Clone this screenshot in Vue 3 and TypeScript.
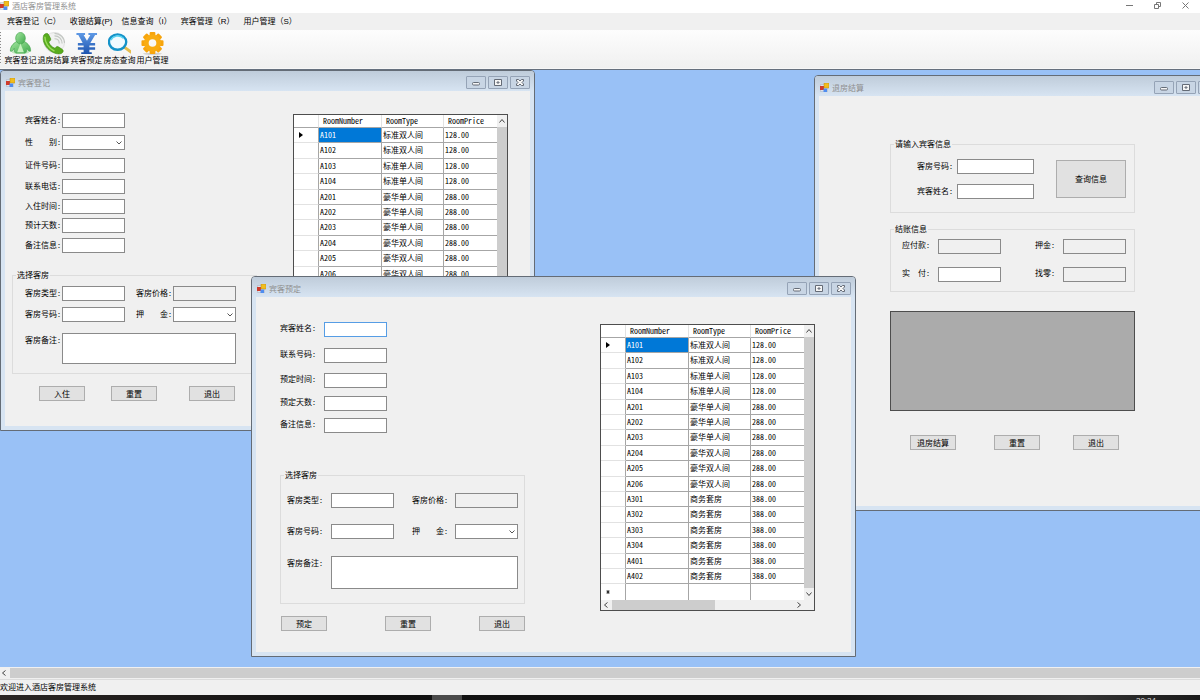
<script setup lang="ts">
interface Field { id: string; label: string; kind: 'text' | 'select'; focus?: boolean }
interface ChildWindow { id: string; title: string; fields: Field[]; actions: string[] }
interface Room { number: string; type: string; price: string }

const menus: string[] = ['宾客登记（C）', '收银结算(P)', '信息查询（I）', '宾客管理（R）', '用户管理（S）']

const tools: { icon: string; label: string }[] = [
  { icon: 'guest', label: '宾客登记' },
  { icon: 'phone', label: '退房结算' },
  { icon: 'yuan', label: '宾客预定' },
  { icon: 'search', label: '房态查询' },
  { icon: 'gear', label: '用户管理' },
]

const text = (id: string, label: string, focus = false): Field => ({ id, label, kind: 'text', focus })

const windows: ChildWindow[] = [
  {
    id: 'checkin',
    title: '宾客登记',
    fields: [
      text('name', '宾客姓名:'),
      { id: 'sex', label: '性　　别:', kind: 'select' },
      text('card', '证件号码:'),
      text('phone', '联系电话:'),
      text('date', '入住时间:'),
      text('days', '预计天数:'),
      text('memo', '备注信息:'),
    ],
    actions: ['入住', '重置', '退出'],
  },
  { id: 'checkout', title: '退房结算', fields: [], actions: ['退房结算', '重置', '退出'] },
  {
    id: 'booking',
    title: '宾客预定',
    fields: [
      text('name', '宾客姓名:', true),
      text('phone', '联系号码:'),
      text('date', '预定时间:'),
      text('days', '预定天数:'),
      text('memo', '备注信息:'),
    ],
    actions: ['预定', '重置', '退出'],
  },
]

const room = (type: string, price: string, ...numbers: string[]): Room[] =>
  numbers.map((number) => ({ number, type, price }))

const rooms: Room[] = [
  ...room('标准双人间', '128.00', 'A101', 'A102'),
  ...room('标准单人间', '128.00', 'A103', 'A104'),
  ...room('豪华单人间', '288.00', 'A201', 'A202', 'A203'),
  ...room('豪华双人间', '288.00', 'A204', 'A205', 'A206'),
  ...room('商务套房', '388.00', 'A301', 'A302', 'A303', 'A304', 'A401', 'A402'),
]

const teeth: number[] = [0, 45, 90, 135, 180, 225, 270, 315]
</script>

<template>
  <div class="app">
    <header class="titlebar">
      <svg class="form-icon" viewBox="0 0 18 18" aria-hidden="true">
        <rect x="0.5" y="3.5" width="15" height="13" fill="#dfe3ea" stroke="#a9b0bd" />
        <rect x="0" y="6" width="8" height="8" fill="#cf3a2c" />
        <rect x="8" y="0" width="10" height="10" fill="#f2bd1d" stroke="#b98a1a" />
        <rect x="7" y="11" width="7" height="7" fill="#4f8df0" />
      </svg>
      <h1>酒店客房管理系统</h1>
      <div class="controls">
        <button type="button" aria-label="最小化"><svg viewBox="0 0 9 9"><path d="M1 4.5h7" /></svg></button>
        <button type="button" aria-label="还原"><svg viewBox="0 0 9 9"><path d="M1.5 3.5h4v4h-4zM3.5 3.5v-2h4v4h-2" /></svg></button>
        <button type="button" aria-label="关闭"><svg viewBox="0 0 9 9"><path d="M1.5 1.5l6 6M7.5 1.5l-6 6" /></svg></button>
      </div>
    </header>

    <nav class="menubar">
      <button v-for="m in menus" :key="m" type="button">{{ m }}</button>
    </nav>

    <div class="toolbar">
      <button v-for="t in tools" :key="t.label" type="button">
        <svg viewBox="0 0 24 24" aria-hidden="true">
          <template v-if="t.icon === 'guest'">
            <defs>
              <linearGradient id="g-guest" x1="0" y1="0" x2="1" y2="1">
                <stop offset="0" stop-color="#a4e6a0" /><stop offset="1" stop-color="#3faa4b" />
              </linearGradient>
            </defs>
            <ellipse cx="12" cy="21" rx="9" ry="2" fill="#bfe6bd" />
            <path d="M8 10C4 12 1 16 1.5 20c2 .8 3-1 4-3 0 2 0 4 1.5 5h10c1.5-1 1.5-3 1.5-5 1 2 2 3.8 4 3C23 16 20 12 16 10z" fill="url(#g-guest)" stroke="#4daa55" stroke-width=".8" />
            <ellipse cx="12" cy="6.5" rx="5" ry="6" fill="url(#g-guest)" stroke="#4daa55" stroke-width=".8" />
            <path d="M12 12l-3.5 9h7z" fill="#c5f2bd" />
          </template>
          <template v-else-if="t.icon === 'phone'">
            <circle cx="13" cy="11" r="10.5" fill="#f1f2f1" stroke="#dedede" />
            <path d="M13 7c3 0 5 2 5 5M13 4c5 0 8 3.5 8 8M13 1.5c6 0 10.5 4.5 10.5 10" fill="none" stroke="#c3c7c3" stroke-width="1.2" />
            <path d="M2 3c2-2 4-2 5 0l2 4c.5 1.5-1 2.5-2 3.5 1 3 3.5 5.5 6.500 6.5 1-1 2-2.5 3.5-1.5l4 2.5c2 1.5 1 3.5-1 4.5C11 25-2 13 2 3z" fill="#58ad1d" stroke="#3f8c12" stroke-width=".7" />
            <path d="M3 5c0 6 4 12 10 15" fill="none" stroke="#9bdc5c" stroke-width="1.5" />
          </template>
          <template v-else-if="t.icon === 'yuan'">
            <defs>
              <linearGradient id="g-yuan" x1="0" y1="0" x2="0" y2="1">
                <stop offset="0" stop-color="#5f9ae6" /><stop offset="1" stop-color="#1c53ae" />
              </linearGradient>
            </defs>
            <path d="M1.5 1h9v2H9l3.500 6L16 3h-2V1h9v2h-2l-5 8.5h5V14h-6v2h6v2.500h-6V21h2.500v2h-11v-2H9v-2.500H3V16h6v-2H3v-2.500h5L3.500 3h-2z" fill="url(#g-yuan)" />
          </template>
          <template v-else-if="t.icon === 'search'">
            <path d="M16 15l8 6" stroke="#e5bd4c" stroke-width="3" stroke-linecap="round" />
            <ellipse cx="10" cy="10.5" rx="9" ry="8" fill="#f2fbff" stroke="#1593c9" stroke-width="2.5" />
            <path d="M3 8.5C5 4 12 2.5 16 6.5" fill="none" stroke="#56d3f0" stroke-width="1.5" />
          </template>
          <template v-else>
            <ellipse cx="12" cy="22.8" rx="10" ry="1" fill="#c9c9c9" />
            <g fill="#f7a40d">
              <rect v-for="a in teeth" :key="a" x="9" y="0" width="6" height="6" rx="1" :transform="`rotate(${a} 12 11.5)`" />
            </g>
            <circle cx="12" cy="11.5" r="6.5" fill="none" stroke="#f9ac12" stroke-width="5" />
          </template>
        </svg>
        <span>{{ t.label }}</span>
      </button>
    </div>

    <main class="desktop">
      <section v-for="w in windows" :key="w.id" :class="['window', w.id]" :aria-label="w.title">
        <header class="caption">
          <svg class="form-icon" viewBox="0 0 18 18" aria-hidden="true">
            <rect x="0.5" y="3.5" width="15" height="13" fill="#dfe3ea" stroke="#a9b0bd" />
            <rect x="0" y="6" width="8" height="8" fill="#cf3a2c" />
            <rect x="8" y="0" width="10" height="10" fill="#f2bd1d" stroke="#b98a1a" />
            <rect x="7" y="11" width="7" height="7" fill="#4f8df0" />
          </svg>
          <h2>{{ w.title }}</h2>
          <div class="caption-buttons">
            <button type="button" aria-label="最小化"><svg viewBox="0 0 10 9"><rect x="1.5" y="4.5" width="7" height="2.5" rx="1" /></svg></button>
            <button type="button" aria-label="最大化"><svg viewBox="0 0 10 9"><path d="M1.5 1.5h7v6h-7zM4 4h2v1H4z" /></svg></button>
            <button type="button" aria-label="关闭"><svg viewBox="0 0 10 9"><path d="M1.5 1.5h2L5 3l1.5-1.5h2v1.5L7 4.5 8.5 6v1.5h-2L5 6 3.5 7.5h-2V6L3 4.5 1.5 3z" /></svg></button>
          </div>
        </header>

        <div v-if="w.id === 'checkout'" class="body">
          <form class="entry" @submit.prevent>
            <fieldset class="lookup">
              <legend>请输入宾客信息</legend>
              <div class="lookup-grid">
                <label for="out-room">客房号码:</label><input id="out-room" type="text" />
                <label for="out-name">宾客姓名:</label><input id="out-name" type="text" />
                <button type="button" class="query">查询信息</button>
              </div>
            </fieldset>
            <fieldset class="bill">
              <legend>结账信息</legend>
              <div class="bill-grid">
                <label for="out-due">应付款:</label><input id="out-due" type="text" readonly />
                <label for="out-deposit" class="second">押金:</label><input id="out-deposit" type="text" readonly />
                <label for="out-paid">实　付:</label><input id="out-paid" type="text" />
                <label for="out-change" class="second">找零:</label><input id="out-change" type="text" readonly />
              </div>
            </fieldset>
            <div class="empty-grid"></div>
            <div class="actions">
              <button v-for="a in w.actions" :key="a" type="button">{{ a }}</button>
            </div>
          </form>
        </div>

        <div v-else class="body">
          <form class="entry" @submit.prevent>
            <div class="fields">
              <template v-for="f in w.fields" :key="f.id">
                <label :for="`${w.id}-${f.id}`">{{ f.label }}</label>
                <span v-if="f.kind === 'select'" class="combo">
                  <select :id="`${w.id}-${f.id}`"><option></option><option>男</option><option>女</option></select>
                  <svg viewBox="0 0 6 4" aria-hidden="true"><path d="M.5.5L3 3 5.5.5" /></svg>
                </span>
                <input v-else :id="`${w.id}-${f.id}`" type="text" :class="{ focused: f.focus }" />
              </template>
            </div>
            <fieldset class="room">
              <legend>选择客房</legend>
              <div class="room-grid">
                <label :for="`${w.id}-type`">客房类型:</label><input :id="`${w.id}-type`" type="text" />
                <label :for="`${w.id}-price`" class="second">客房价格:</label><input :id="`${w.id}-price`" type="text" readonly />
                <label :for="`${w.id}-room`">客房号码:</label><input :id="`${w.id}-room`" type="text" />
                <label :for="`${w.id}-deposit`" class="second">押　　金:</label>
                <span class="combo">
                  <select :id="`${w.id}-deposit`"><option></option><option>100</option><option>200</option></select>
                  <svg viewBox="0 0 6 4" aria-hidden="true"><path d="M.5.5L3 3 5.5.5" /></svg>
                </span>
                <label :for="`${w.id}-note`">客房备注:</label><textarea :id="`${w.id}-note`"></textarea>
              </div>
            </fieldset>
            <div class="actions">
              <button v-for="a in w.actions" :key="a" type="button">{{ a }}</button>
            </div>
          </form>

          <div class="data-grid">
            <table>
              <colgroup><col class="c-mark" /><col class="c-number" /><col class="c-type" /><col /></colgroup>
              <thead>
                <tr><th></th><th>RoomNumber</th><th>RoomType</th><th>RoomPrice</th></tr>
              </thead>
              <tbody>
                <tr v-for="(r, i) in rooms" :key="r.number">
                  <td class="mark"><svg v-if="i === 0" viewBox="0 0 4 6" aria-hidden="true"><path d="M0 0l4 3-4 3z" /></svg></td>
                  <td :class="{ selected: i === 0 }">{{ r.number }}</td>
                  <td>{{ r.type }}</td>
                  <td>{{ r.price }}</td>
                </tr>
                <tr>
                  <td class="mark"><svg viewBox="0 0 4 6" aria-hidden="true"><path d="M2 1v4M.5 2l3 2M3.5 2l-3 2" stroke="#222" /></svg></td>
                  <td></td><td></td><td></td>
                </tr>
              </tbody>
            </table>
            <div class="scroll vertical">
              <svg viewBox="0 0 6 6"><path d="M.5 4.5L3 1.5l2.5 3" /></svg>
              <span></span>
              <svg viewBox="0 0 6 6"><path d="M.5 1.5l2.5 3 2.5-3" /></svg>
            </div>
            <div class="scroll horizontal">
              <svg viewBox="0 0 6 6"><path d="M4.5.5L1.5 3l3 2.5" /></svg>
              <span></span>
              <svg viewBox="0 0 6 6"><path d="M1.5.5L4.5 3l-3 2.5" /></svg>
            </div>
          </div>
        </div>
      </section>
    </main>

    <div class="scroll page-scroll">
      <svg viewBox="0 0 6 6"><path d="M4.5.5L1.5 3l3 2.5" /></svg>
      <span></span>
    </div>
    <footer class="status">欢迎进入酒店客房管理系统</footer>
    <div class="taskbar"><i></i><time>20:24</time></div>
  </div>
</template>

<style>
body {
  margin: 0;
}
</style>

<style scoped>
.app {
  display: flex;
  flex-direction: column;
  height: 100vh;
  overflow: hidden;
  background: #f0f0f0;
  color: #000;
  font: 8px/13px "Liberation Sans", "Noto Sans CJK SC", sans-serif;
}
.app *,
.app *::before {
  box-sizing: border-box;
}
button,
input,
select,
textarea {
  margin: 0;
  padding: 0;
  border-radius: 0;
  font: inherit;
  color: inherit;
}
button {
  white-space: nowrap;
}
svg {
  display: block;
  flex: none;
}
h1,
h2 {
  margin: 0;
  font-size: 8px;
  font-weight: 400;
  color: #8f8f8f;
}
.form-icon {
  width: 9px;
  height: 9px;
}

/* main window frame */
.titlebar {
  display: flex;
  flex: none;
  align-items: center;
  gap: 3px;
  height: 13px;
  background: #fff;
  line-height: 12px;
}
.titlebar .form-icon {
  margin-bottom: 2px;
}
.controls {
  display: flex;
  gap: 19px;
  margin-left: auto;
  padding: 0 10px 3px 0;
}
.controls button {
  border: 0;
  background: none;
}
.controls svg {
  width: 9px;
  height: 9px;
  fill: none;
  stroke: #777;
}
.menubar {
  display: flex;
  flex: none;
  gap: 9px;
  height: 17px;
  padding-left: 7px;
}
.menubar button {
  border: 0;
  background: none;
  line-height: 17px;
}
.toolbar {
  display: flex;
  flex: none;
  height: 39px;
  padding: 2px 0 0 3px;
  border-bottom: 1px solid #f7f7f7;
  background: linear-gradient(#fdfdfd, #f0f0f0);
}
.toolbar::before {
  content: "";
  width: 1px;
  height: 32px;
  margin: 0 2px 0 -3px;
  background: repeating-linear-gradient(#8a8a8a 0 1px, #f6f6f6 1px 3px);
}
.toolbar button {
  display: flex;
  flex-direction: column;
  align-items: center;
  width: 33px;
  border: 0;
  background: none;
  line-height: 12px;
}
.toolbar button:first-of-type {
  margin-left: 1px;
}
.toolbar svg {
  width: 23px;
  height: 23px;
}

/* child windows */
.desktop {
  position: relative;
  flex: 1;
  min-height: 0;
  overflow: hidden;
  border-top: 1px solid #66707e;
  background: #99c1f6;
}
.window {
  position: absolute;
  display: flex;
  flex-direction: column;
  padding: 0 4px 4px;
  border: 1px solid #646c76;
  border-radius: 4px 4px 0 0;
  background: #d7e4f2;
  font-family: "Noto Sans Mono CJK SC", "Noto Sans CJK SC", "Liberation Mono", monospace;
}
.checkin {
  left: 0;
  top: 0;
  width: 535px;
  height: 361px;
}
.checkout {
  left: 814px;
  top: 5px;
  width: 409px;
  height: 436px;
}
.booking {
  left: 251px;
  top: 206px;
  width: 605px;
  height: 381px;
}
.caption {
  display: flex;
  flex: none;
  align-items: center;
  gap: 3px;
  height: 20px;
  margin: 0 -4px;
  padding: 3px 4px 0 5px;
  border-radius: 3px 3px 0 0;
  background: linear-gradient(#bfccda, #d7e4f2);
}
.caption-buttons {
  display: flex;
  gap: 2px;
  margin-left: auto;
}
.caption-buttons button {
  display: grid;
  place-items: center;
  width: 20px;
  height: 13px;
  border: 1px solid #95a3b6;
  border-radius: 1px;
  background: #c8d5e4;
}
.caption-buttons svg {
  width: 10px;
  height: 9px;
  fill: #f5f5f5;
  stroke: #646b76;
}
.body {
  display: flex;
  flex: 1;
  align-items: flex-start;
  background: #f0f0f0;
}
.entry {
  flex: none;
  width: 245px;
}

/* controls */
label,
legend {
  white-space: nowrap;
}
input,
select,
textarea {
  display: block;
  width: 100%;
  height: 15px;
  border: 1px solid #8a8a8a;
  background: #fff;
  outline: none;
}
input[readonly] {
  background: #f0f0f0;
}
.focused {
  border-color: #569de5;
}
textarea {
  resize: none;
}
.combo {
  position: relative;
  height: 15px;
}
.combo select {
  appearance: none;
}
.combo svg {
  position: absolute;
  right: 3px;
  top: 6px;
  width: 6px;
  height: 4px;
  fill: none;
  stroke: #555;
  pointer-events: none;
}
fieldset {
  min-width: 0;
  margin: 0;
  padding: 0;
  border: 1px solid #dcdcdc;
}
legend {
  margin-left: 3px;
  padding: 0 1px;
  line-height: 12px;
}
.actions {
  display: grid;
}
.actions button,
.query {
  width: 46px;
  height: 15px;
  border: 1px solid #adadad;
  background: #e1e1e1;
  line-height: 12px;
}
.fields,
.room-grid,
.lookup-grid,
.bill-grid {
  display: grid;
  align-items: start;
}
.room-grid .second,
.bill-grid .second {
  grid-column: -3;
}
.room-grid input,
.bill-grid input {
  width: 63px;
}
.room-grid textarea {
  grid-column: 2 / -1;
  height: 100%;
}

/* guest registration */
.checkin .body {
  gap: 36px;
  padding: 22px 0 0 7px;
}
.checkin .fields {
  grid-template-columns: 37px 63px;
  grid-template-rows: 22px 23px 21px 20px 19px 20px 15px;
  padding-left: 13px;
}
.checkin .room {
  margin-top: 16px;
}
.checkin .room-grid {
  grid-template-columns: 37px 63px 11px 37px 63px;
  grid-template-rows: 21px 26px 31px;
  padding: 5px 0 9px 12px;
}
.checkin .actions {
  grid-template-columns: 72px 78px 46px;
  margin: 12px 0 0 27px;
}

/* reservation */
.booking .body {
  gap: 75px;
  padding: 25px 0 0 24px;
}
.booking .fields {
  grid-template-columns: 44px 63px;
  grid-template-rows: 26px 25px 23px 22px 15px;
  line-height: 11px;
}
.booking .room {
  margin-top: 36px;
}
.booking .room-grid {
  grid-template-columns: 44px 63px 18px 43px 63px;
  grid-template-rows: 31px 32px 33px;
  padding: 12px 0 14px 6px;
}
.booking .actions {
  grid-template-columns: 104px 94px 46px;
  margin: 12px 0 0 1px;
}

/* checkout */
.checkout .body {
  padding: 42px 0 0 71px;
}
.lookup-grid {
  grid-template-columns: 40px 77px 22px 70px;
  grid-template-rows: 25px 15px;
  padding: 9px 0 13px 26px;
}
.lookup-grid label {
  grid-column: 1;
}
.query {
  grid-area: 1 / 4 / 3 / 5;
  align-self: center;
  width: 70px;
  height: 38px;
}
.bill {
  margin-top: 10px;
}
.bill-grid {
  grid-template-columns: 36px 63px 34px 28px 63px;
  grid-template-rows: 28px 15px;
  padding: 4px 0 9px 11px;
  line-height: 11px;
}
.empty-grid {
  height: 100px;
  margin-top: 19px;
  border: 1px solid #4d4d4d;
  background: #ababab;
}
.checkout .actions {
  grid-template-columns: 84px 79px 46px;
  margin: 24px 0 0 20px;
}

/* room list */
.data-grid {
  display: grid;
  flex: none;
  grid-template: 275px 10px / 203px 10px;
  margin-top: 1px;
  border: 1px solid #4d4d4d;
  background: #f0f0f0;
}
.booking .data-grid {
  margin-top: 2px;
}
table {
  width: 100%;
  table-layout: fixed;
  border-collapse: separate;
  border-spacing: 0;
  background: #fff;
}
.c-mark {
  width: 25px;
}
.c-number {
  width: 63px;
}
.c-type {
  width: 62px;
}
tr {
  height: 15px;
}
tbody tr:nth-child(5n + 2),
tbody tr:nth-child(5n + 4) {
  height: 16px;
}
th,
td {
  padding: 0 1px;
  border-right: 1px solid #a6a6a6;
  border-bottom: 1px solid #a6a6a6;
  font-weight: 400;
  line-height: 12px;
  text-align: left;
  white-space: nowrap;
}
td {
  padding-bottom: 1px;
}
th {
  height: 13px;
  padding-left: 4px;
  border-right-color: #e2e2e2;
}
thead tr {
  height: 13px;
}
th:last-child,
td:last-child {
  border-right: 0;
}
tbody tr:last-child td {
  border-bottom: 0;
}
.mark {
  padding-left: 5px;
  border-bottom-color: #e2e2e2;
}
.mark svg {
  width: 4px;
  height: 6px;
}
.selected {
  background: #0078d7;
  color: #fff;
}
.scroll {
  display: flex;
  align-items: center;
  gap: 3px;
  padding: 2px;
  background: #f0f0f0;
}
.scroll svg {
  width: 6px;
  height: 6px;
  fill: none;
  stroke: #444;
}
.scroll span {
  background: #cdcdcd;
}
.vertical {
  flex-direction: column;
  padding: 3px 0;
}
.vertical span {
  flex: 1;
  width: 10px;
}
.horizontal {
  grid-column: 1;
  padding: 0 2px;
}
.horizontal span {
  width: 103px;
  height: 10px;
}
.horizontal svg:last-child {
  margin-left: auto;
}

/* bottom strips */
.page-scroll {
  flex: none;
  height: 12px;
  padding: 1px 0 1px 1px;
}
.page-scroll span {
  flex: 1;
  height: 10px;
}
.status {
  flex: none;
  height: 16px;
  border-top: 1px solid #dcdcdc;
  line-height: 15px;
}
.taskbar {
  display: flex;
  flex: none;
  height: 5px;
  overflow: hidden;
  background: linear-gradient(90deg, #2a2523, #101010 30%, #161616 70%, #333 90%, #1a1a1a);
  color: #ddd;
  line-height: 10px;
}
.taskbar i {
  width: 30px;
  margin-left: 36%;
  background: #4a4a4a;
}
.taskbar time {
  margin: 1px 44px 0 auto;
}
</style>
